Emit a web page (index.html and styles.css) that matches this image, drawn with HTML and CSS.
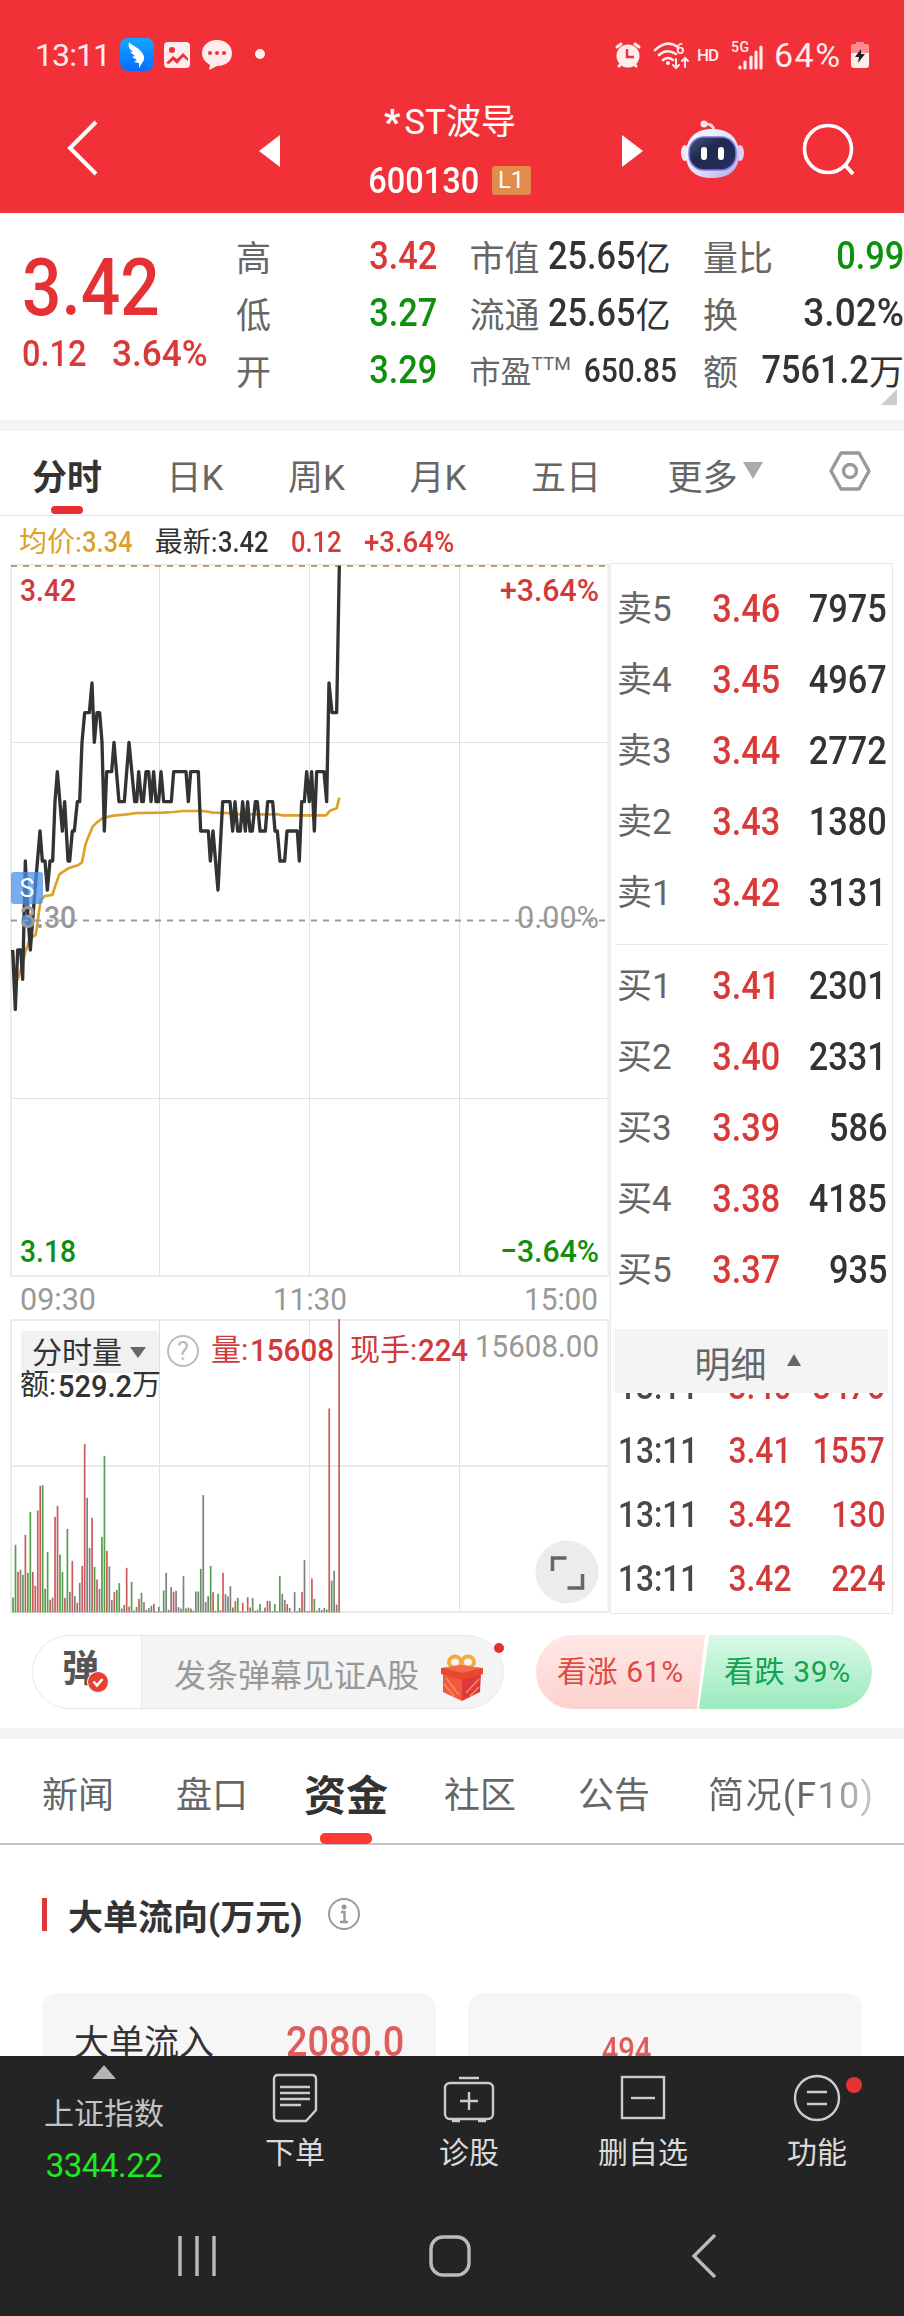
FILE: index.html
```html
<!DOCTYPE html>
<html lang="zh-CN">
<head>
    <meta charset="UTF-8">
    <meta name="viewport" content="width=device-width, initial-scale=1.0">
    <title>*ST波导 600130</title>
    <link rel="stylesheet" href="styles.css">
</head>
<body>

<header class="header">
    <div class="status">
        <span class="clock">13:11</span>
        <svg class="status-left" width="150" height="36" viewBox="0 0 150 36">
            <defs>
                <linearGradient id="app" x1="0" y1="0" x2="0" y2="1"><stop offset="0" stop-color="#12a8ff"/><stop offset="1" stop-color="#0a6cff"/></linearGradient>
            </defs>
            <rect x="1" y="1" width="34" height="33" rx="8" fill="url(#app)"/>
            <path d="M10 5 C12 8 21 11 24 17 C26 21 25 24 23 26 L20 31 L20 26 L15 25 L18 23 L13 20 L16 19 L11 15 L14 15 C10 12 9 9 10 5 Z" fill="#fff"/>
            <rect x="45" y="5" width="26" height="26" rx="4" fill="#ffecec"/>
            <circle cx="53" cy="13" r="3" fill="#f23038"/>
            <path d="M47 26 L54 19 L58 22 L64 16 L69 21 L69 24 L64 20 L58 27 L54 23 L50 27 Z" fill="#f23038"/>
            <path d="M98 3 C107 3 113 9 113 16 C113 24 107 29 98 29 L90 33 L91 28 C86 25 83 21 83 16 C83 9 89 3 98 3 Z" fill="#ffecec"/>
            <circle cx="91" cy="16" r="2" fill="#f23038"/><circle cx="98" cy="16" r="2" fill="#f23038"/><circle cx="105" cy="16" r="2" fill="#f23038"/>
            <circle cx="141" cy="17" r="5" fill="#ffecec"/>
        </svg>
        <svg class="status-right" width="158" height="36" viewBox="614 36 158 36">
            <g fill="none" stroke="#ffecec" stroke-width="3" stroke-linecap="round">
                <path d="M618 46 L622 43 M636 43 L640 46 M620 65 L623 62 M637 65 L634 62"/>
                <path d="M656 49 Q668 38 679 46 M660 54 Q668 47 677 53 M664 59 Q669 55 674 59" stroke-width="2.6"/>
                <path d="M677 58 V67 M674 64 L677 67 L680 64 M686 66 V57 M683 60 L686 57 L689 60" stroke-width="2"/>
                <path d="M741 66 V67 M746 61 V67 M752 56 V67 M757 51 V67 M762 46 V67" stroke-width="3.2"/>
            </g>
            <circle cx="629" cy="55" r="11.500" fill="#ffecec"/>
            <path d="M628 48 V56 H635" fill="none" stroke="#f23038" stroke-width="2.500"/>
            <circle cx="669" cy="62" r="2" fill="#ffecec"/>
            <g fill="#ffecec" font-weight="500">
                <text x="677" y="53" font-size="15">6</text>
                <text x="698" y="60" font-size="17" textLength="22">HD</text>
                <text x="732" y="51" font-size="14" textLength="18">5G</text>
            </g>
        </svg>
        <span class="battery-text">64%</span>
        <svg width="20" height="28" viewBox="0 0 20 28">
            <path d="M1 14 V5 Q1 3 3 3 H6 V1 H14 V3 H17 Q19 3 19 5 V14 Z" fill="#ff8a8f"/>
            <path d="M1 12 H19 V24 Q19 27 16 27 H4 Q1 27 1 24 Z" fill="#ffecec"/>
            <path d="M11 8 L5 16 H9 L8 22 L15 13 H11 Z" fill="#222"/>
        </svg>
    </div>
    <div class="title-bar">
        <svg class="back" width="36" height="60" viewBox="0 0 36 60"><path d="M32 4 L6 30 L32 56" fill="none" stroke="#fff" stroke-width="4"/></svg>
        <svg class="prev" width="21" height="32" viewBox="0 0 21 32"><path d="M21 0 V32 L0 16 Z" fill="#fff"/></svg>
        <div class="title">
            <div class="stock-name"><span class="star">*</span>ST波导</div>
            <div class="stock-code"><span class="n">600130</span><span class="badge">L1</span></div>
        </div>
        <svg class="next" width="21" height="32" viewBox="0 0 21 32"><path d="M0 0 V32 L21 16 Z" fill="#fff"/></svg>
        <svg class="robot" width="64" height="60" viewBox="0 0 64 60">
            <defs>
                <linearGradient id="head" x1="0" y1="0" x2="1" y2="1"><stop offset="0" stop-color="#fff"/><stop offset=".6" stop-color="#dcdcfa"/><stop offset="1" stop-color="#a9a4ea"/></linearGradient>
                <linearGradient id="visor" x1="0" y1="0" x2="1" y2="1"><stop offset="0" stop-color="#45597c"/><stop offset=".4" stop-color="#1f2a4d"/><stop offset="1" stop-color="#252c60"/></linearGradient>
            </defs>
            <path d="M25 5 Q33 4 34 12" fill="none" stroke="#f7d9e2" stroke-width="3"/>
            <circle cx="24" cy="5" r="3.500" fill="#fce6ec"/>
            <ellipse cx="5" cy="34" rx="4" ry="8" fill="#eee6fb"/>
            <ellipse cx="60" cy="34" rx="4" ry="8" fill="#dcd0f5"/>
            <path d="M32 10 C50 10 59 20 59 35 C59 51 49 59 32 59 C15 59 6 51 6 35 C6 20 15 10 32 10 Z" fill="url(#head)"/>
            <rect x="9" y="18" width="47" height="33" rx="15" fill="url(#visor)" stroke="#8574e8" stroke-width="1.500"/>
            <rect x="21" y="28" width="6" height="13" rx="3" fill="#fff"/>
            <rect x="38" y="28" width="6" height="13" rx="3" fill="#fff"/>
        </svg>
        <svg class="search" width="56" height="56" viewBox="0 0 56 56" fill="none" stroke="#fff" stroke-width="3.600"><circle cx="27" cy="27" r="23.500"/><path d="M44 43 L52 52" stroke-width="4"/></svg>
    </div>
</header>

<section class="quote">
    <div class="price">
        <div class="last"><span class="nl">3.42</span></div>
        <div class="change"><span class="nl">0.12</span><span class="nl pct">3.64%</span></div>
    </div>
    <div class="stats">
        <div>高<b class="n red">3.42</b></div>
        <div>市值<b><span class="n">25.65</span><i>亿</i></b></div>
        <div>量比<b class="n green">0.99</b></div>
        <div>低<b class="n green">3.27</b></div>
        <div>流通<b><span class="n">25.65</span><i>亿</i></b></div>
        <div>换<b class="n pct">3.02%</b></div>
        <div>开<b class="n green">3.29</b></div>
        <div class="small">市盈<sup>TTM</sup><b class="n">650.85</b></div>
        <div>额<b><span class="n">7561.2</span><i>万</i></b></div>
    </div>
    <svg class="corner" width="16" height="16" viewBox="0 0 16 16"><path d="M16 0 V16 H0 Z" fill="#ccc"/></svg>
</section>

<nav class="period-tabs">
    <span class="active">分时</span>
    <span>日K</span>
    <span>周K</span>
    <span>月K</span>
    <span>五日</span>
    <span class="more">更多<svg width="20" height="17" viewBox="0 0 20 17"><path d="M0 0 H20 L10 17 Z" fill="#aaa"/></svg></span>
    <svg class="hex" width="44" height="42" viewBox="0 0 44 42" fill="none" stroke="#999" stroke-width="3.400" stroke-linejoin="round"><path d="M13 3 H31 L41 21 L31 39 H13 L3 21 Z"/><circle cx="22" cy="21" r="6.500"/></svg>
</nav>

<div class="legend">
    <span class="orange">均价:<span class="nl">3.34</span></span>
    <span>最新:<span class="nl">3.42</span></span>
    <span class="red"><span class="nl">0.12</span></span>
    <span class="red"><span class="nl pct">+3.64%</span></span>
</div>

<main class="market">
    <svg class="chart" width="610" height="1056" viewBox="0 560 610 1056">
        <!-- grid -->
        <g stroke="#e0e0e0" stroke-width="1">
            <path d="M11 742.500 H608 M11 1098.500 H608 M159.500 565 V1276 M309.500 565 V1276 M459.500 565 V1276"/>
            <path d="M159.500 1320 V1612 M309.500 1320 V1612 M459.500 1320 V1612"/>
        </g>
        <g fill="none" stroke="#ebebeb" stroke-width="2">
            <rect x="11" y="565" width="597.500" height="711"/>
            <rect x="11" y="1320" width="597.500" height="292"/>
            <path d="M11 1466 H608"/>
        </g>
        <path d="M11 566 H605" stroke="#bda06c" stroke-width="2" stroke-dasharray="6 6"/>

        <g font-size="32" font-weight="500">
            <text class="fill-red" x="20" y="601" textLength="56" lengthAdjust="spacingAndGlyphs">3.42</text>
            <text class="fill-red" x="500" y="601" textLength="99" lengthAdjust="spacingAndGlyphs">+3.64%</text>
            <text class="fill-green" x="20" y="1262" textLength="56" lengthAdjust="spacingAndGlyphs">3.18</text>
            <text class="fill-green" x="500" y="1262" textLength="99" lengthAdjust="spacingAndGlyphs">−3.64%</text>
        </g>

        <!-- price lines, drawn at three units per pixel -->
        <g transform="translate(0 540) scale(.33333)" fill="none" stroke-linejoin="round">
            <polyline stroke="#dda028" stroke-width="8" points="38,1230 44,1290 53,1318 65,1280 78,1230 90,1195 98,1190 107,1185 115,1130 122,1080 135,1068 157,1065 165,1040 178,1003 190,995 205,985 235,975 246,967 256,915 264,893 278,860 290,848 308,834 340,827 380,823 410,819 490,818 520,816 550,813 610,813 640,818 680,819 720,823 835,823 845,826 978,826 990,812 1010,805 1018,773"/>
            <polyline stroke="#333" stroke-width="10" points="38,1230 46,1408 53,1230 62,1230 68,1318 76,963 84,1130 91,1230 105,1050 120,873 127,963 135,963 142,1050 150,963 158,963 165,785 172,695 187,873 194,785 204,963 209,963 217,873 223,873 232,785 239,785 246,607 254,518 268,518 276,429 283,607 291,518 299,518 306,607 313,873 320,695 335,695 342,607 357,785 373,785 387,607 404,785 410,785 416,695 425,785 430,785 438,695 446,695 453,785 461,695 468,785 476,785 483,695 491,785 514,785 521,695 558,695 565,785 572,695 595,695 602,873 625,873 631,963 639,873 654,1050 668,785 690,785 698,873 705,785 713,873 721,873 728,785 736,873 743,785 750,873 757,873 766,785 772,785 780,873 796,873 803,785 818,785 825,873 832,873 840,963 854,963 861,873 892,873 898,963 905,785 913,785 920,695 928,785 935,695 943,873 950,695 972,695 980,785 987,429 996,518 1010,518 1018,77"/>
        </g>

        <!-- sell marker -->
        <circle cx="27" cy="920" r="5.500" fill="#3f82dc"/>
        <path d="M14 872 H40 Q43 872 43 875 V901 Q43 904 40 904 H31 L27 908 L23 904 H14 Q11 904 11 901 V875 Q11 872 14 872 Z" fill="#4a90ea" fill-opacity=".75"/>
        <text x="27" y="897" font-size="25" fill="#fff" text-anchor="middle">S</text>

        <g font-size="32" fill="#999">
            <text x="20" y="928" font-weight="500" textLength="56" lengthAdjust="spacingAndGlyphs">3.30</text>
            <text x="517" y="928" textLength="82" lengthAdjust="spacingAndGlyphs">0.00%</text>
            <text x="20" y="1310" textLength="76" lengthAdjust="spacingAndGlyphs">09:30</text>
            <text x="273" y="1310" textLength="74" lengthAdjust="spacingAndGlyphs">11:30</text>
            <text x="524" y="1310" textLength="74" lengthAdjust="spacingAndGlyphs">15:00</text>
            <text x="475" y="1357" textLength="124" lengthAdjust="spacingAndGlyphs">15608.00</text>
        </g>
        <path d="M11 920.500 H605" stroke="#999" stroke-width="2" stroke-dasharray="6 6"/>

        <!-- volume -->
        <g id="bars"></g>
        <rect x="21" y="1331" width="138" height="42" rx="4" fill="#f1f1f1"/>
        <path d="M130 1347 H146 L138 1358 Z" fill="#666"/>
        <g font-size="30" fill="#333">
            <text x="32" y="1363" textLength="90" lengthAdjust="spacingAndGlyphs">分时量</text>
            <text x="20" y="1395" font-size="29">额:</text>
            <text x="58" y="1397" font-size="32" font-weight="500" textLength="74" lengthAdjust="spacingAndGlyphs">529.2</text>
            <text x="132" y="1395" font-size="29">万</text>
        </g>
        <circle cx="183" cy="1351" r="15" fill="none" stroke="#bbb" stroke-width="2"/>
        <text x="183" y="1360" font-size="25" fill="#bbb" text-anchor="middle">?</text>
        <g class="fill-red" font-size="30">
            <text x="211" y="1360">量:</text>
            <text x="250" y="1361" font-size="32" font-weight="500" textLength="84" lengthAdjust="spacingAndGlyphs">15608</text>
            <text x="350" y="1360">现手:</text>
            <text x="418" y="1361" font-size="32" font-weight="500" textLength="50" lengthAdjust="spacingAndGlyphs">224</text>
        </g>
        <circle cx="567" cy="1572" r="31.500" fill="#ececec"/>
        <path d="M553 1571 V1558 H567 M583 1574 V1588 H568" fill="none" stroke="#666" stroke-width="3.500" transform="translate(-.5 0)"/>
    </svg>

    <div class="book">
        <div class="orders">
            <div>卖5<b class="red n">3.46</b><b class="n">7975</b></div>
            <div>卖4<b class="red n">3.45</b><b class="n">4967</b></div>
            <div>卖3<b class="red n">3.44</b><b class="n">2772</b></div>
            <div>卖2<b class="red n">3.43</b><b class="n">1380</b></div>
            <div>卖1<b class="red n">3.42</b><b class="n">3131</b></div>
        </div>
        <div class="orders buy">
            <div>买1<b class="red n">3.41</b><b class="n">2301</b></div>
            <div>买2<b class="red n">3.40</b><b class="n">2331</b></div>
            <div>买3<b class="red n">3.39</b><b class="n">586</b></div>
            <div>买4<b class="red n">3.38</b><b class="n">4185</b></div>
            <div>买5<b class="red n">3.37</b><b class="n">935</b></div>
        </div>
        <div class="detail-head">明细<svg width="14" height="12" viewBox="0 0 14 12"><path d="M0 12 H14 L7 0 Z" fill="#666"/></svg></div>
        <div class="trades">
            <div><span class="nl">13:11</span><span class="n red">3.40</span><span class="n red">3476</span></div>
            <div><span class="nl">13:11</span><span class="n red">3.41</span><span class="n red">1557</span></div>
            <div><span class="nl">13:11</span><span class="n red">3.42</span><span class="n red">130</span></div>
            <div><span class="nl">13:11</span><span class="n red">3.42</span><span class="n red">224</span></div>
        </div>
    </div>
</main>

<section class="danmu">
    <div class="danmu-input">
        <div class="danmu-toggle">弹<svg width="24" height="24" viewBox="0 0 24 24"><circle cx="12" cy="12" r="10.500" fill="#e8402f" stroke="#fff"/><path d="M7.500 11.500 L11 15.500 L16.500 9" fill="none" stroke="#fff" stroke-width="2.600"/></svg></div>
        <div class="danmu-text">发条弹幕见证A股</div>
        <svg class="gift" width="44" height="48" viewBox="0 0 44 48">
            <g fill="none" stroke="#f2ac3c" stroke-width="4"><ellipse cx="15" cy="8" rx="6" ry="5.500"/><ellipse cx="28" cy="8" rx="6" ry="5.500"/></g>
            <path d="M3 19 L22 25 V47 L3 38 Z" fill="#ef5a3c"/>
            <path d="M22 25 L41 19 L40 38 L22 47 Z" fill="#dc3a3c"/>
            <path d="M1 14 L20 12 L43 14 L43 20 L22 26 L1 20 Z" fill="#e8482e"/>
            <path d="M3 14 L21 11 L41 14 L22 19 Z" fill="#f26a48"/>
            <path d="M6 24 L19 41 M4 30 L14 42 M39 25 L26 39 M39 33 L30 42" stroke="#f98a5a" stroke-width="1.500"/>
        </svg>
        <span class="dot"></span>
    </div>
    <div class="vote">
        <div class="up">看涨 61%</div>
        <div class="down">看跌 39%</div>
    </div>
</section>

<nav class="info-tabs">
    <span>新闻</span>
    <span>盘口</span>
    <span class="active">资金</span>
    <span>社区</span>
    <span>公告</span>
    <span class="fade">简况(F10)</span>
</nav>

<section class="flow">
    <h2>大单流向(万元)<svg width="34" height="34" viewBox="0 0 34 34"><circle cx="17" cy="17" r="15" fill="none" stroke="#999" stroke-width="2"/><circle cx="17" cy="10" r="2.500" fill="#999"/><path d="M14 15 H17.500 V25 M13 25 H21" fill="none" stroke="#999" stroke-width="2.400"/></svg></h2>
    <div class="cards">
        <div class="card"><span class="card-label">大单流入</span><span class="n amount">2080.0</span></div>
        <div class="card chart-card"><span class="n">494</span></div>
    </div>
</section>

<footer class="footer">
    <div class="toolbar">
        <div class="index">
            <svg width="24" height="14" viewBox="0 0 24 14"><path d="M0 14 H24 L12 0 Z" fill="#b5b5b5"/></svg>
            <span>上证指数</span>
            <span class="index-value">3344.22</span>
        </div>
        <div class="tool">
            <svg width="52" height="52" viewBox="0 0 52 52"><path d="M9 3 H43 Q47 3 47 7 V38 L37 49 H9 Q5 49 5 45 V7 Q5 3 9 3 Z M11 15 H41 M11 21 H41 M11 27 H41 M11 33 H32"/></svg>
            下单
        </div>
        <div class="tool">
            <svg width="52" height="52" viewBox="0 0 52 52"><rect x="2" y="11" width="48" height="36" rx="5"/><path d="M16 6 H36 M26 20 V38 M17 29 H35 M9 49 H17 M35 49 H43"/></svg>
            诊股
        </div>
        <div class="tool">
            <svg width="52" height="52" viewBox="0 0 52 52"><rect x="5" y="5" width="42" height="41"/><path d="M14 26 H38"/></svg>
            删自选
        </div>
        <div class="tool">
            <svg width="52" height="52" viewBox="0 0 52 52"><circle cx="26" cy="26" r="22"/><path d="M16 20 H36 M16 32 H36"/></svg>
            功能
            <span class="dot"></span>
        </div>
    </div>
    <div class="system-nav">
        <svg width="42" height="44" viewBox="0 0 42 44"><path d="M4 2 V42 M21 2 V42 M38 2 V42"/></svg>
        <svg width="44" height="44" viewBox="0 0 44 44"><rect x="3" y="3" width="38" height="38" rx="12"/></svg>
        <svg width="30" height="46" viewBox="0 0 30 46"><path d="M26 2 L5 23 L26 44"/></svg>
    </div>
</footer>

<script src="script.js"></script>
</body>
</html>
```

FILE: styles.css
```css
* {box-sizing: border-box;}

body {
    margin: 0;
    width: 904px;
    height: 2316px;
    overflow: hidden;
    background: #fff;
    color: #333;
    font-family: Roboto, "Noto Sans CJK SC", sans-serif;
    white-space: nowrap;
}

svg {display: block; flex: none;}

b {font-weight: 500;}
i {font-style: normal; font-weight: 400;}

.red {color: #d93a38;}
.green {color: #0e900e;}
.orange {color: #dda028;}
.fill-red {fill: #d03a3a;}
.fill-green {fill: #0e900e;}

/* Narrow figures, anchored right (n) or left (nl) */
.n, .nl {
    display: inline-block;
    transform: scaleX(.88);
}
.n {transform-origin: right; margin-left: -.3em;}
.nl {transform-origin: left;}
.pct {transform: scaleX(.95);}

/* Header */
.header {
    height: 213px;
    background: #f23038;
    color: #fff;
}

.status {
    display: flex;
    align-items: center;
    height: 110px;
    padding: 0 34px 0 35px;
    color: #ffecec;
}
.clock {width: 84px; font-size: 32px; letter-spacing: -.9px;}
.status-right {margin-left: auto;}
.battery-text {width: 79px; padding-left: 3px; font-size: 34px; letter-spacing: 1.5px;}

.title-bar {
    display: flex;
    align-items: center;
    height: 90px;
    padding-left: 64px;
}
.back {margin-top: -14px;}
.prev {margin-left: 159px; margin-top: -9px;}
.next {margin-top: -9px;}
.title {
    width: 342px;
    margin-top: -1px;
    padding-right: 2px;
    text-align: center;
}
.stock-name {height: 51px; font-size: 35px; line-height: 48px;}
.star {font-weight: 900; margin-right: 4px;}
.stock-code {
    display: flex;
    align-items: center;
    justify-content: center;
    height: 60px;
    font-size: 37px;
    font-weight: 500;
}
.stock-code .n {margin-left: -16px;}
.badge {
    width: 39px;
    height: 29px;
    margin-left: 12px;
    border-radius: 3px;
    background: #e28c4b;
    font-size: 24px;
    font-weight: 400;
    line-height: 29px;
}
.robot {margin-left: 37px; margin-top: -13px;}
.search {margin-left: 57px; margin-top: -11px;}

/* Quote */
.quote {
    position: relative;
    display: flex;
    height: 218px;
    border-bottom: 11px solid #f4f4f4;
}
.price {width: 236px; padding: 29px 0 0 22px; color: #e43133;}
.last {height: 84px; font-size: 79px; font-weight: 500; line-height: 92px;}
.change {display: flex; font-size: 37px; line-height: 56px; font-weight: 500; color: #d93a38;}
.change .nl + .nl {margin-left: 17px;}

.stats {
    display: grid;
    grid-template-columns: 201px 201px 201px;
    column-gap: 32.5px;
    grid-auto-rows: 57px;
    padding-top: 14px;
}
.stats div {
    display: flex;
    align-items: center;
    font-size: 35px;
    color: #666;
}
.stats b {margin-left: auto; color: #333; font-size: 39px; display: flex; align-items: center;}
.stats b.red {color: #d93a38;}
.stats b.green {color: #0e900e;}
.stats i {font-size: 35px;}
.stats .small {font-size: 31px;}
.stats .small b {font-size: 34px;}
.stats sup {font-size: 19px; align-self: flex-start; margin-top: 11px;}
.corner {position: absolute; right: 7px; bottom: 15px;}

/* Period tabs */
.period-tabs {
    position: relative;
    display: flex;
    align-items: center;
    height: 85px;
    padding: 2px 0 0 32px;
    border-bottom: 1px solid #e4e4e4;
    font-size: 35px;
    color: #666;
}
.period-tabs span {margin-right: 64.5px;}
.period-tabs .active {
    position: relative;
    color: #333;
    font-weight: 700;
}
.period-tabs .active::after {
    content: "";
    position: absolute;
    left: 19px;
    bottom: -14px;
    width: 32px;
    height: 8px;
    border-radius: 4px;
    background: #e62f30;
}
.period-tabs .more {display: flex; align-items: center; margin-left: 2px;}
.more svg {margin: -7px 0 0 6px;}
.hex {margin-top: -6px;}

.legend {
    display: flex;
    align-items: center;
    gap: 15.5px;
    height: 44px;
    padding: 8px 0 0 19px;
    font-size: 28px;
    line-height: 36px;
}
.legend .nl {font-size: 29px; font-weight: 500;}

/* Chart and order book */
.market {display: flex; height: 1056px;}

.book {
    width: 283px;
    height: 1051px;
    margin-top: 3px;
    border: 1px solid #e8e8e8;
    padding: 0 4px;
    overflow: hidden;
}
.orders {padding: 10px 1px 15px 2px; font-size: 35px; color: #666;}
.orders.buy {padding: 6px 1px 15px 2px; border-top: 1px solid #e8e8e8;}
.orders div {
    display: grid;
    grid-template-columns: 78px 85px 1fr;
    align-items: center;
    height: 71px;
    line-height: 67px;
}
.orders b {font-size: 39px; color: #333; justify-self: end; line-height: 71px;}
.orders b.red {color: #d93a38;}

.detail-head {
    position: relative;
    display: flex;
    align-items: center;
    justify-content: center;
    height: 64px;
    margin-top: 8px;
    padding: 2px 8px 0 0;
    background: #f4f4f4;
    font-size: 36px;
    color: #666;
}
.detail-head svg {margin: -5px 0 0 20px;}
.trades {
    height: 218px;
    overflow: hidden;
    padding-left: 3px;
    font-size: 36px;
    font-weight: 500;
}
.trades div {
    display: grid;
    grid-template-columns: 92px 81px 1fr;
    align-items: center;
    height: 64px;
    padding-right: 3px;
    color: #484848;
}
.trades div:first-child {margin-top: -38px;}
.trades .n {justify-self: end;}
.trades .red {color: #d03a3a;}

/* Bullet comments */
.danmu {
    display: flex;
    height: 123px;
    padding: 19px 31px 0 32px;
    border-bottom: 11px solid #f4f4f4;
}
.danmu-input {
    position: relative;
    display: flex;
    align-items: center;
    width: 472px;
    height: 74px;
    border: 1px solid #eaeaea;
    border-radius: 37px;
    background: #f4f4f4;
}
.danmu-toggle {
    position: relative;
    width: 109px;
    height: 72px;
    border-right: 1px solid #eaeaea;
    border-radius: 36px 0 0 36px;
    background: #fff;
    font-size: 37px;
    font-weight: 700;
    line-height: 68px;
    padding-left: 29px;
    color: #555;
}
.danmu-toggle svg {position: absolute; left: 53px; top: 34px;}
.danmu-text {width: 265px; padding-left: 32px; padding-top: 2px; font-size: 32px; color: #999;}
.gift {margin: 12px 0 0 33px;}
.danmu-input .dot {
    position: absolute;
    right: -1px;
    top: 7px;
    width: 10px;
    height: 10px;
    border-radius: 5px;
    background: #e03030;
}
.vote {
    display: flex;
    width: 336px;
    height: 74px;
    margin-left: 32px;
    border-radius: 37px;
    overflow: hidden;
    font-size: 30px;
    line-height: 74px;
}
.up {
    width: 171px;
    padding-left: 21px;
    background: linear-gradient(#ffe9e7, #fdd2ce);
    clip-path: polygon(0 0, 100% 0, 161px 100%, 0 100%);
    color: #e04a42;
    letter-spacing: .6px;
}
.down {
    width: 175px;
    margin-left: -6px;
    padding-left: 25px;
    background: linear-gradient(#d9f9e7, #9beabc);
    clip-path: polygon(10px 0, 100% 0, 100% 100%, 0 100%);
    color: #12a352;
    letter-spacing: .6px;
}

/* Info tabs */
.info-tabs {
    display: flex;
    align-items: center;
    height: 106px;
    padding: 2px 0 0 42px;
    border-bottom: 2px solid #c4c4c4;
    font-size: 36px;
    color: #666;
}
.info-tabs span {margin-right: 62px;}
.info-tabs span:nth-child(2), .info-tabs .active {margin-right: 56px;}
.info-tabs .active {
    position: relative;
    color: #333;
    font-size: 42px;
    font-weight: 700;
}
.info-tabs .active::after {
    content: "";
    position: absolute;
    left: 16px;
    bottom: -21px;
    width: 52px;
    height: 11px;
    border-radius: 5px;
    background: #fa3a32;
}
.info-tabs .fade {
    margin: 0 0 0 -4px;
    background: linear-gradient(90deg, #666 60%, #ccc);
    -webkit-background-clip: text;
    background-clip: text;
    color: transparent;
    letter-spacing: 1.3px;
}

/* Money flow */
.flow {height: 211px; padding: 53px 42px 0; overflow: hidden;}
.flow h2 {
    display: flex;
    align-items: center;
    height: 33px;
    margin: 0;
    border-left: 5px solid #d93a38;
    padding-left: 21px;
    font-size: 35px;
    font-weight: 700;
}
.flow h2 svg {margin-left: 24px; margin-top: -1px;}
.cards {display: flex; gap: 32px; margin-top: 62px;}
.card {
    display: flex;
    justify-content: space-between;
    width: 394px;
    height: 180px;
    padding: 22px 32px;
    border-radius: 16px;
    background: #f6f6f6;
    font-size: 35px;
    line-height: 54px;
}
.card-label {padding-top: 2px;}
.amount, .chart-card {color: #e05c5a;}
.amount {font-size: 43px; font-weight: 500; margin-top: -1px;}
.chart-card {justify-content: center; padding: 30px 74px 0 0; font-size: 33px; font-weight: 500;}

/* Footer */
.footer {height: 260px; background: #242424; color: #c4c4c4;}
.toolbar {display: flex; height: 145px;}
.index {
    display: flex;
    flex-direction: column;
    align-items: center;
    width: 208px;
    padding-top: 9px;
    font-size: 30px;
    line-height: 44px;
}
.index span {margin-top: 13px;}
.index .index-value {margin-top: 8px; color: #1eea1e; font-size: 33px; letter-spacing: -.5px;}
.tool {
    position: relative;
    display: flex;
    flex-direction: column;
    align-items: center;
    width: 174px;
    padding-top: 16px;
    font-size: 30px;
    line-height: 58px;
    color: #dadada;
}
.tool svg, .system-nav svg {
    fill: none;
    stroke: #ccc;
    stroke-width: 2.4;
}
.tool .dot {
    position: absolute;
    left: 116px;
    top: 21px;
    width: 16px;
    height: 16px;
    border-radius: 8px;
    background: #e83232;
}
.system-nav {
    display: flex;
    align-items: center;
    height: 110px;
    padding-left: 176px;
}
.system-nav svg {stroke: #bbb; stroke-width: 3.4;}
.system-nav svg + svg {margin-left: 210px;}
.system-nav svg + svg + svg {margin-left: 217px;}
```

FILE: script.js
```javascript
// one bar per minute: colour (r, g, k = flat) and height
const volumes = 'g45 g203 r122 k128 g113 r233 g119 g302 r122 r80 r306 r380 g382 g71 g182 r38 k45 r287 r320 g174 g122 r44 g251 k62 r155 k49 r29 k89 r140 r506 k344 k194 r284 g137 r99 k71 g227 g470 r185 k138 k37 r61 g68 g88 k12 k23 r134 r18 g92 k6 k17 r41 g59 k31 r8 k13 g20 r26 k3 k17 r4 g66 k119 k8 k76 r62 k65 k16 k12 k109 g12 g15 r12 k6 k63 k63 g131 k352 k32 k49 g140 r61 k5 g56 r7 r119 k55 k48 k79 g15 r34 g44 k4 r29 r3 r46 g15 k43 r5 k8 g26 k4 k15 r35 k34 k4 g25 k4 g109 k56 k38 r25 k14 k2 k61 k4 g14 r61 k157 r4 r4 r102 g41 k5 k14 k7 k14 g9 r612 g96 k125 k24 r880';
const colors = {r: '#cc5c5c', g: '#55a04c', k: '#808080'};

const bars = document.getElementById('bars');
volumes.split(' ').forEach((item, i) => {
    const height = parseInt(item.slice(1)) / 3;
    const rect = document.createElementNS('http://www.w3.org/2000/svg', 'rect');
    rect.setAttribute('x', 12.2 + i * 2.47);
    rect.setAttribute('y', 1612.5 - height);
    rect.setAttribute('width', 1.7);
    rect.setAttribute('height', height);
    rect.setAttribute('fill', colors[item[0]]);
    bars.appendChild(rect);
});
```
